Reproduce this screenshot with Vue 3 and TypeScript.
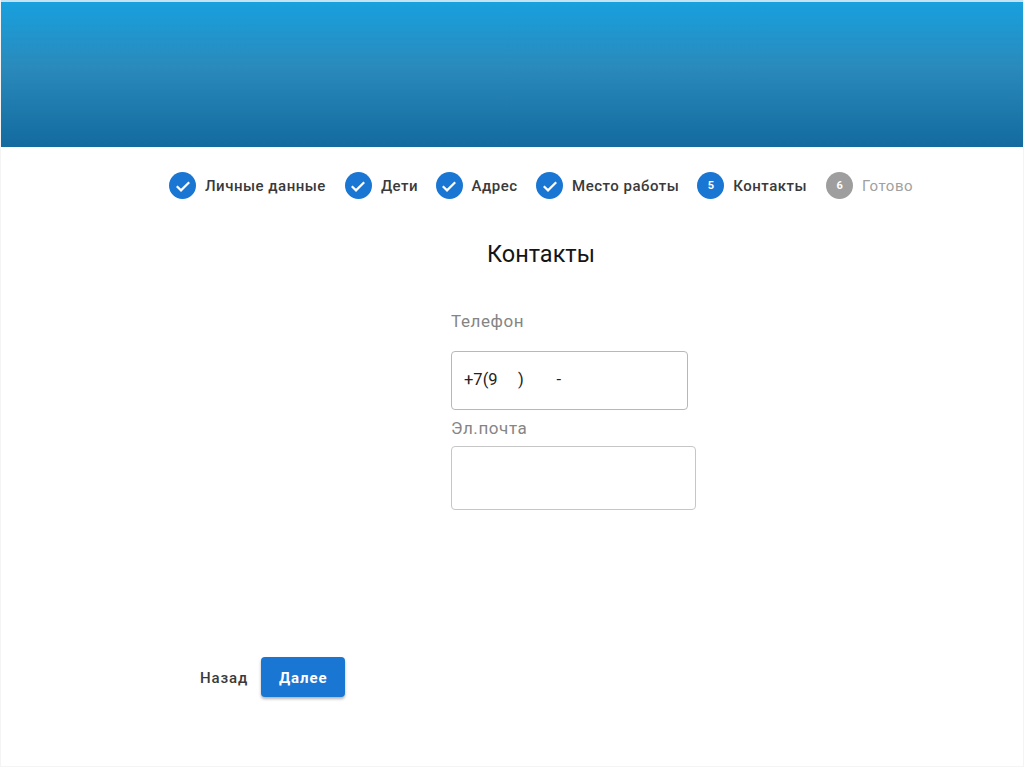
<script setup lang="ts">
interface Step { label: string; num?: string; done?: boolean; muted?: boolean; gap: string }
const steps: Step[] = [
  { label: 'Личные данные', done: true, gap: '19px' },
  { label: 'Дети', done: true, gap: '17.5px' },
  { label: 'Адрес', done: true, gap: '18.5px' },
  { label: 'Место работы', done: true, gap: '18px' },
  { label: 'Контакты', num: '5', gap: '19px' },
  { label: 'Готово', num: '6', muted: true, gap: '0px' },
]
</script>

<template>
  <div class="page">
    <header class="banner"></header>
    <main class="content">
      <nav class="stepper">
        <div v-for="s in steps" :key="s.label" class="step" :class="{ muted: s.muted }" :style="{ marginRight: s.gap }">
          <span class="dot">
            <svg v-if="s.done" width="16" height="16" viewBox="0 0 16 16" fill="none">
              <path d="M1.8 8.3 6 12.4 14.2 4.2" stroke="#fff" stroke-width="2.2" />
            </svg>
            <template v-else>{{ s.num }}</template>
          </span>
          <span class="step-label">{{ s.label }}</span>
        </div>
      </nav>
      <h1 class="title">Контакты</h1>
      <form class="form" @submit.prevent>
        <label class="label phone-label" for="phone">Телефон</label>
        <input id="phone" class="field phone" type="text" value="+7(9     )        -" />
        <label class="label mail-label" for="mail">Эл.почта</label>
        <input id="mail" class="field mail" type="text" />
      </form>
      <div class="actions">
        <button class="back" type="button">Назад</button>
        <button class="next" type="button">Далее</button>
      </div>
    </main>
  </div>
</template>

<style>
html, body { margin: 0; background: #fff; }
</style>

<style scoped>
.page {
  width: 1024px;
  height: 767px;
  box-sizing: border-box;
  display: flex;
  flex-direction: column;
  font-family: Roboto, "Liberation Sans", sans-serif;
  border-right: 1px solid #f4f4f4;
  border-bottom: 1px solid #f4f4f4;
  border-left: 1px solid #f4f4f4;
  overflow: hidden;
}
.banner {
  height: 147px;
  flex: none;
  margin: 0 -1px;
  box-sizing: border-box;
  border-top: 2px solid #c4e2f2;
  background: linear-gradient(180deg, #18a0de 0%, #2a8abb 45%, #136a9e 100%);
}
.content {
  flex: 1;
  display: flex;
  flex-direction: column;
  min-height: 0;
}
.stepper {
  display: flex;
  align-items: center;
  padding: 25px 0 0 168px;
  height: 27px;
}
.step {
  display: flex;
  align-items: center;
  gap: 9px;
  white-space: nowrap;
}
.dot {
  width: 27px;
  height: 27px;
  border-radius: 50%;
  background: #1976d2;
  color: #fff;
  display: flex;
  align-items: center;
  justify-content: center;
  font-size: 11px;
  font-weight: 700;
}
.step-label {
  font-size: 15px;
  font-weight: 500;
  letter-spacing: 0.5px;
  color: #3a3a3a;
}
.muted .dot { background: #9e9e9e; }
.muted .step-label { color: #a0a0a0; font-weight: 400; }
.title {
  margin: 41px 0 0 486px;
  font-size: 23.5px;
  line-height: 28px;
  font-weight: 400;
  color: #151515;
}
.form {
  display: flex;
  flex-direction: column;
  align-items: flex-start;
  margin: 0 0 0 450px;
}
.label {
  font-size: 17px;
  line-height: 20px;
  letter-spacing: 0.6px;
  color: #858585;
}
.phone-label { margin-top: 43px; }
.field {
  display: block;
  box-sizing: border-box;
  padding: 0 12px 2px;
  background: #fff;
  border: 1px solid #c6c6c6;
  border-radius: 4px;
  font-family: inherit;
  font-size: 16.5px;
  color: #222;
  outline: none;
  white-space: pre;
}
.phone {
  width: 237px;
  height: 59px;
  margin-top: 20px;
  border-color: #b8b8b8;
}
.mail-label { margin-top: 8px; }
.mail {
  width: 245px;
  height: 64px;
  margin-top: 8px;
}
.actions {
  display: flex;
  align-items: center;
  gap: 13px;
  margin: 147px 0 0 199px;
}
.back, .next {
  font-family: inherit;
  font-size: 15px;
  letter-spacing: 0.9px;
  border: 0;
  cursor: pointer;
}
.back {
  padding: 2px 0 0;
  background: none;
  font-weight: 500;
  color: #3a3a3a;
}
.next {
  width: 84px;
  height: 40px;
  padding: 2px 0 0;
  border-radius: 4px;
  background: #1976d2;
  color: #fff;
  font-weight: 700;
  box-shadow: 0 2px 3px rgba(0, 0, 0, 0.3);
}
</style>
